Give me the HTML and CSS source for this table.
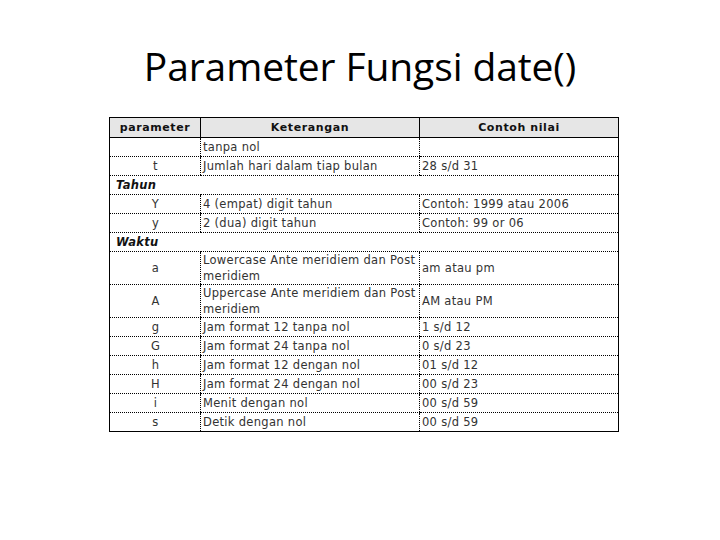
FILE: index.html
```html
<!DOCTYPE html>
<html>
<head>
<meta charset="utf-8">
<link rel="stylesheet" href="styles.css">
</head>
<body>
<div class="slide">
  <h1 class="title">Parameter Fungsi date()</h1>
  <table class="params">
    <colgroup><col class="c1"><col class="c2"><col class="c3"></colgroup>
    <tr class="head"><th>parameter</th><th>Keterangan</th><th>Contoh nilai</th></tr>
    <tr><td class="p"></td><td>tanpa nol</td><td></td></tr>
    <tr><td class="p">t</td><td>Jumlah hari dalam tiap bulan</td><td>28 s/d 31</td></tr>
    <tr class="sec"><td colspan="3">Tahun</td></tr>
    <tr><td class="p">Y</td><td>4 (empat) digit tahun</td><td>Contoh: 1999 atau 2006</td></tr>
    <tr><td class="p">y</td><td>2 (dua) digit tahun</td><td>Contoh: 99 or 06</td></tr>
    <tr class="sec"><td colspan="3">Waktu</td></tr>
    <tr class="two"><td class="p">a</td><td class="top">Lowercase Ante meridiem dan Post meridiem</td><td>am atau pm</td></tr>
    <tr class="two"><td class="p">A</td><td class="top">Uppercase Ante meridiem dan Post meridiem</td><td>AM atau PM</td></tr>
    <tr><td class="p">g</td><td>Jam format 12 tanpa nol</td><td>1 s/d 12</td></tr>
    <tr><td class="p">G</td><td>Jam format 24 tanpa nol</td><td>0 s/d 23</td></tr>
    <tr><td class="p">h</td><td>Jam format 12 dengan nol</td><td>01 s/d 12</td></tr>
    <tr><td class="p">H</td><td>Jam format 24 dengan nol</td><td>00 s/d 23</td></tr>
    <tr><td class="p">i</td><td>Menit dengan nol</td><td>00 s/d 59</td></tr>
    <tr><td class="p">s</td><td>Detik dengan nol</td><td>00 s/d 59</td></tr>
  </table>
</div>
</body>
</html>
```

FILE: styles.css
```css
html, body {
  margin: 0;
  padding: 0;
  background: #ffffff;
}
.slide {
  width: 720px;
  height: 540px;
  display: flex;
  flex-direction: column;
  align-items: flex-start;
}
.title {
  align-self: stretch;
  margin: 40px 0 0 0;
  height: 77px;
  font-family: "Open Sans", "Liberation Sans", sans-serif;
  font-weight: normal;
  font-size: 39px;
  line-height: 52px;
  text-align: center;
  color: #000;
  letter-spacing: -0.1px;
}
.params {
  margin-left: 109px;
  width: 509px;
  border-collapse: collapse;
  border: 1px solid #000;
  table-layout: fixed;
  font-family: "DejaVu Sans", Verdana, sans-serif;
  font-size: 11.5px;
  letter-spacing: 0.3px;
  color: #333;
}
.c1 { width: 91px; }
.c2 { width: 219px; }
.c3 { width: 199px; }
.params th {
  background: #e6e6e6;
  font-weight: bold;
  font-size: 11px;
  color: #111;
  height: 19px;
  padding: 0;
  border: 1px solid #000;
  text-align: center;
  letter-spacing: 0.6px;
}
.params td {
  height: 18px;
  padding: 0 1px 0 2px;
  border-bottom: 1px dotted #000;
  border-left: 1px dotted #000;
  vertical-align: middle;
  line-height: 15px;
  white-space: nowrap;
}
.params td.p {
  text-align: center;
  border-left: 1px solid #000;
}
.params tr.two td {
  height: 32px;
  white-space: normal;
}
.params tr.two td.top {
  vertical-align: top;
  line-height: 16px;
}
.params tr.sec td {
  font-weight: bold;
  font-style: italic;
  color: #111;
  padding-left: 6px;
  border-left: 1px solid #000;
  letter-spacing: 0.3px;
}
```
